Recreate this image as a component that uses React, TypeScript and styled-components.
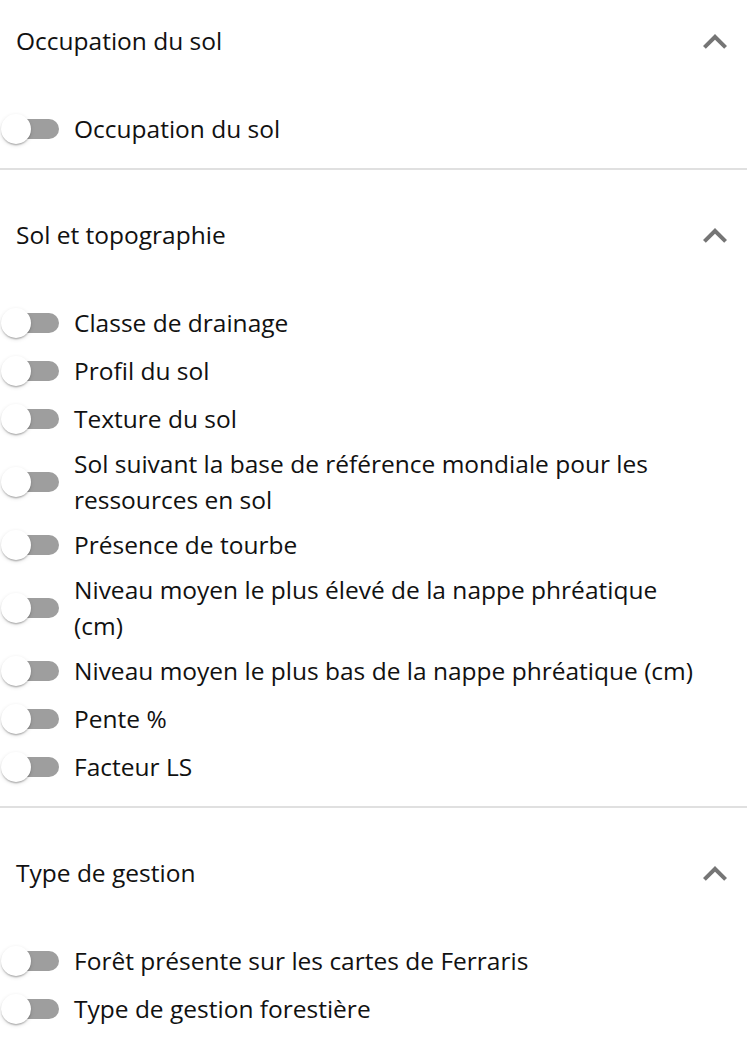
import React from 'react';
import styled, { createGlobalStyle } from 'styled-components';

const GlobalStyle = createGlobalStyle`
  html, body {
    margin: 0;
    padding: 0;
    background: #ffffff;
  }
  body {
    font-family: 'Open Sans', 'Noto Sans', sans-serif;
    color: #111111;
  }
`;

interface Section {
  title: string;
  layers: string[];
}

const sections: Section[] = [
  { title: 'Occupation du sol', layers: ['Occupation du sol'] },
  {
    title: 'Sol et topographie',
    layers: [
      'Classe de drainage',
      'Profil du sol',
      'Texture du sol',
      'Sol suivant la base de référence mondiale pour les ressources en sol',
      'Présence de tourbe',
      'Niveau moyen le plus élevé de la nappe phréatique (cm)',
      'Niveau moyen le plus bas de la nappe phréatique (cm)',
      'Pente %',
      'Facteur LS',
    ],
  },
  {
    title: 'Type de gestion',
    layers: ['Forêt présente sur les cartes de Ferraris', 'Type de gestion forestière'],
  },
];

const Panel = styled.div`
  width: 747px;
  display: flex;
  flex-direction: column;
`;

const StyledSection = styled.section<{ $last?: boolean }>`
  display: flex;
  flex-direction: column;
  padding-bottom: 15px;
  border-bottom: ${(p) => (p.$last ? 'none' : '2px solid #e0e0e0')};
  & + & {
    padding-top: 24px;
  }
`;

const Header = styled.div`
  height: 84px;
  box-sizing: border-box;
  display: flex;
  align-items: center;
  justify-content: space-between;
  padding: 0 8px 3px 16px;
  margin-bottom: 21px;
  font-size: 24.5px;
  line-height: 37px;
`;

const Chevron = styled.svg`
  width: 48px;
  height: 48px;
  margin-top: 3px;
  fill: #757575;
  flex-shrink: 0;
`;

const Row = styled.label`
  min-height: 48px;
  padding: 2.5px 40px 2.5px 0;
  display: flex;
  align-items: center;
  box-sizing: border-box;
  cursor: pointer;
`;

const SwitchBox = styled.span`
  position: relative;
  width: 60px;
  height: 32px;
  margin-right: 14px;
  flex-shrink: 0;
`;

const Track = styled.span`
  position: absolute;
  left: 9px;
  top: 6px;
  width: 50px;
  height: 20px;
  border-radius: 10px;
  background: #9e9e9e;
`;

const Thumb = styled.span`
  position: absolute;
  left: 1px;
  top: 1px;
  width: 30px;
  height: 30px;
  border-radius: 50%;
  background: #ffffff;
  box-shadow: 0 2px 1.5px -1.5px rgba(0, 0, 0, 0.2), 0 1.5px 1.5px 0 rgba(0, 0, 0, 0.14),
    0 1.5px 4.5px 0 rgba(0, 0, 0, 0.12);
`;

const LayerName = styled.span`
  font-size: 24.5px;
  line-height: 36px;
  padding-bottom: 1px;
`;

const Toggle = () => (
  <SwitchBox>
    <Track />
    <Thumb />
  </SwitchBox>
);

export default function App() {
  return (
    <Panel>
      <GlobalStyle />
      {sections.map((s, i) => (
        <StyledSection key={s.title} $last={i === sections.length - 1}>
          <Header>
            <span>{s.title}</span>
            <Chevron viewBox="0 0 24 24">
              <path d="M12 8l-6 6 1.41 1.41L12 10.83l4.59 4.58L18 14z" />
            </Chevron>
          </Header>
          {s.layers.map((l) => (
            <Row key={l}>
              <Toggle />
              <LayerName>{l}</LayerName>
            </Row>
          ))}
        </StyledSection>
      ))}
    </Panel>
  );
}
